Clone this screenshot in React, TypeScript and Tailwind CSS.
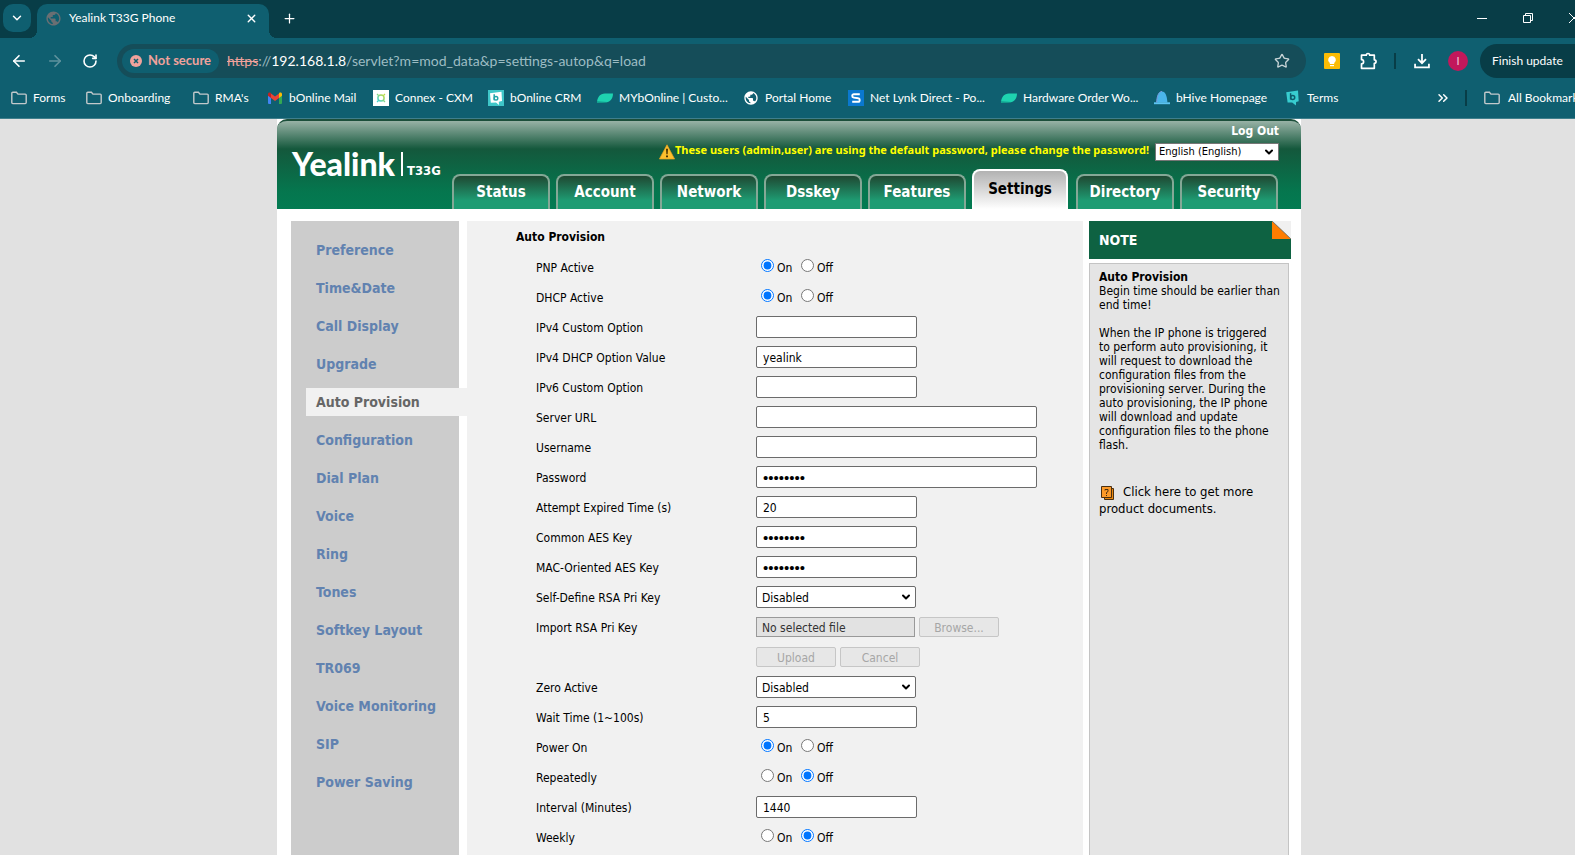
import type { ReactNode } from 'react'
import {
  ArrowLeft,
  ArrowRight,
  ChevronDown,
  ChevronsRight,
  Plus,
  RotateCw,
  Star,
  X,
} from 'lucide-react'
import { MdPublic } from 'react-icons/md'

/* ---------- icons ---------- */

function FolderIcon() {
  return (
    <svg viewBox="0 0 16 14" className="h-3.5 w-4" fill="none" stroke="#c3c9cb" strokeWidth="1.4">
      <path d="M.8 11.6V2.2a1 1 0 0 1 1-1h3.6l1.6 1.9h7.2a1 1 0 0 1 1 1v7.5a1 1 0 0 1-1 1H1.8a1 1 0 0 1-1-1z" />
    </svg>
  )
}

function GmailIcon() {
  return (
    <svg viewBox="0 0 16 12" className="h-3 w-4">
      <path d="M1 2v9a1 1 0 0 0 1 1h2V4z" fill="#4285f4" />
      <path d="M12 4v8h2a1 1 0 0 0 1-1V2z" fill="#34a853" />
      <path d="M12 1.6V6l3-2.2V2c0-1.7-1.8-1.9-2.6-1.3z" fill="#fbbc04" />
      <path d="M4 6V1.6l4 3 4-3V6L8 9z" fill="#ea4335" />
      <path d="M1 2v1.8L4 6V1.6L3.6.7C2.800 .1 1 .3 1 2z" fill="#c5221f" />
    </svg>
  )
}

function ConnexIcon() {
  return (
    <svg viewBox="0 0 16 16" className="h-4 w-4">
      <rect width="16" height="16" fill="#fff" />
      <defs>
        <linearGradient id="cx" x1="0" y1="1" x2="1" y2="0">
          <stop offset="0" stopColor="#3fd0d8" />
          <stop offset="1" stopColor="#c6dc3c" />
        </linearGradient>
      </defs>
      <circle cx="8" cy="8" r="3.1" fill="none" stroke="url(#cx)" strokeWidth="1.5" />
      <path d="M4 4l1.500 1.500M12 4l-1.500 1.500M4 12l1.500-1.500M12 12l-1.500-1.500" stroke="url(#cx)" strokeWidth="1.200" />
    </svg>
  )
}

function CrmIcon() {
  return (
    <svg viewBox="0 0 16 16" className="h-4 w-4">
      <rect width="16" height="16" fill="#3fc6c8" />
      <path d="M2 3.300 13.500 1.800 14 11l-3.200.8.2 3.200-3-2.600-5.200.3z" fill="#fff" />
      <path d="M6.200 4.300v5.900" stroke="#1fa3a8" strokeWidth="1.500" />
      <circle cx="8" cy="8.300" r="1.800" fill="none" stroke="#1fa3a8" strokeWidth="1.400" />
    </svg>
  )
}

function TermsIcon() {
  return (
    <svg viewBox="0 0 16 16" className="h-4 w-4">
      <path d="M1.200 2.200 13 .4l.7 10.800-2.600.8-.2 3.600-3.700-3.200-4.600.2z" fill="#38cdd0" />
      <path d="M5.600 3.200v6.300" stroke="#0d5c6c" strokeWidth="1.500" />
      <circle cx="7.700" cy="7.500" r="2" fill="none" stroke="#0d5c6c" strokeWidth="1.500" />
    </svg>
  )
}

function LeafIcon() {
  return (
    <svg viewBox="0 0 16 10" className="h-2.5 w-4">
      <path d="M0 9.800C.2 4 3 .4 8 .4h8C16 6 12.800 9.200 8.500 9.200z" fill="#1ed3b0" />
      <path d="M0 9.800c3.500.2 7.500.2 10.500-.9L0 8.300z" fill="#129a8c" />
    </svg>
  )
}

function NetLynkIcon() {
  return (
    <svg viewBox="0 0 16 16" className="h-4 w-4">
      <rect width="16" height="16" fill="#0a78cf" />
      <path d="M11.800 4.200H5.600c-1.200 0-1.400.5-1.400 1.600 0 1.300.3 1.700 1.500 1.800l4.600.6c1.100.1 1.400.6 1.400 1.700 0 1.300-.4 1.900-1.600 1.900H4.200" fill="none" stroke="#fff" strokeWidth="1.900" />
    </svg>
  )
}

function HiveIcon() {
  return (
    <svg viewBox="0 0 16 16" className="h-4 w-4">
      <path d="M2.600 12.500C3 6 4.600 1.500 8 1.500s5 4.500 5.400 11z" fill="#4ab5ea" />
      <path d="M0 12.300h16v1.900H0z" fill="#5cc4f2" />
      <path d="M2.600 12.500C3 6 4.600 1.500 8 1.500" fill="none" stroke="#7a9be0" strokeWidth="1" />
    </svg>
  )
}

function KeepIcon() {
  return (
    <svg viewBox="0 0 16 16" className="h-4 w-4">
      <rect width="16" height="16" rx="1" fill="#fbbc04" />
      <path d="M8 3a3.900 3.900 0 0 0-2.200 7.100v.9h4.400v-.9A3.900 3.900 0 0 0 8 3z" fill="#fff" />
      <path d="M6 12h4v1.200H6z" fill="#fff" />
    </svg>
  )
}

function PuzzleIcon() {
  return (
    <svg viewBox="0 0 18 18" className="h-[18px] w-[18px]" fill="none" stroke="#fff" strokeWidth="1.700" strokeLinejoin="round">
      <path d="M1.500 3.200h4.800a1.700 1.700 0 0 1 3.400 0h4.600v4.600a1.700 1.700 0 0 1 0 3.500v5H1.500v-4.500a2.100 2.100 0 0 0 0-4.200z" />
    </svg>
  )
}

function DownloadIcon() {
  return (
    <svg viewBox="0 0 18 18" className="h-4 w-4" fill="none" stroke="#fff" strokeWidth="2">
      <path d="M9 1v10M4.500 7 9 11.500 13.500 7M1.200 12.200v4h15.600v-4" />
    </svg>
  )
}

function WarningIcon() {
  return (
    <svg viewBox="0 0 16 16" className="h-4 w-4 shrink-0">
      <path d="M8 .8 15.600 15H.4z" fill="#fdbf2d" stroke="#e8a020" strokeWidth=".7" strokeLinejoin="round" />
      <path d="M7 4.800h2l-.4 5.400H7.400zM7 11.400h2v1.900H7z" fill="#4a3200" />
    </svg>
  )
}

function DocumentIcon() {
  return (
    <svg viewBox="0 0 14 16" className="mr-2 ml-0.5 inline-block h-4 w-3.5 align-middle">
      <path d="M3.500 3.500h9v11h-9z" fill="#e8870f" stroke="#4a2f10" />
      <path d="M.5 1.500h10v11H.5z" fill="#fd9a28" stroke="#4a2f10" />
      <path d="M4 5.500v-1h3v2L5.500 7.500v1.500M5.500 10v1" fill="none" stroke="#4a2f10" />
    </svg>
  )
}

/* ---------- browser frame ---------- */

function TabStrip() {
  return (
    <div className="flex h-[38px] items-center bg-[#083d47] pb-0.5 pl-[3px] text-white">
      <button aria-label="Search tabs" className="flex h-7 w-7 items-center justify-center rounded-[10px] bg-[#0f5f70]">
        <ChevronDown size={14} strokeWidth={2.5} />
      </button>
      <div className="relative -mb-0.5 ml-1.5 flex h-[34px] w-[232px] items-center self-end rounded-t-[10px] bg-[#0f5f70] pr-2.5 pb-1.5 pl-2 text-xs">
        <span className="absolute bottom-0 -left-2 h-2 w-2 bg-[radial-gradient(circle_at_0_0,#083d47_8px,#0f5f70_8px)]" />
        <span className="absolute -right-2 bottom-0 h-2 w-2 bg-[radial-gradient(circle_at_100%_0,#083d47_8px,#0f5f70_8px)]" />
        <MdPublic size={17} className="text-[#6a6f73]" />
        <span className="ml-[7px] flex-1">Yealink T33G Phone</span>
        <button aria-label="Close tab" className="flex h-4 w-4 items-center justify-center">
          <X size={13} strokeWidth={2.5} />
        </button>
      </div>
      <button aria-label="New tab" className="ml-3 flex h-4 w-4 items-center justify-center">
        <Plus size={15} strokeWidth={2} />
      </button>
      <div className="mr-0.5 ml-auto flex">
        <button aria-label="Minimize" className="flex h-8 w-[46px] items-center justify-center">
          <svg viewBox="0 0 10 10" className="h-2.5 w-2.5"><path d="M0 5.500h10" stroke="#fff" /></svg>
        </button>
        <button aria-label="Restore" className="flex h-8 w-[46px] items-center justify-center">
          <svg viewBox="0 0 10 10" className="h-2.5 w-2.5" fill="none" stroke="#fff"><path d="M.5 2.500h7v7h-7zM2.500 2.500v-2h7v7h-2" /></svg>
        </button>
        <button aria-label="Close window" className="flex h-8 w-[46px] items-center justify-center">
          <svg viewBox="0 0 10 10" className="h-2.5 w-2.5" stroke="#fff"><path d="M0 0l10 10M10 0L0 10" /></svg>
        </button>
      </div>
    </div>
  )
}

function AddressBar() {
  return (
    <div className="flex h-[46px] items-center text-white">
      <div className="flex w-[117px] items-center gap-[18px] pl-2.5">
        <button aria-label="Back"><ArrowLeft size={18} strokeWidth={2.2} /></button>
        <button aria-label="Forward" className="text-[#5f929d]"><ArrowRight size={18} strokeWidth={2.2} /></button>
        <button aria-label="Reload"><RotateCw size={16} strokeWidth={2.4} /></button>
      </div>
      <div className="flex h-[34px] flex-1 items-center rounded-full bg-[#154d59] pr-4 pl-[5px]">
        <button className="flex h-6 items-center gap-1.5 rounded-full bg-[#0f5f70] pr-2 pl-2 text-[13px] font-bold text-[#f0a29c]">
          <svg viewBox="0 0 12 12" className="h-3 w-3">
            <circle cx="6" cy="6" r="6" fill="#f0a29c" />
            <path d="M4 4l4 4M8 4L4 8" stroke="#0f5f70" strokeWidth="1.500" />
          </svg>
          Not secure
        </button>
        <span className="ml-2 text-sm text-[#9dbcc3]">
          <span className="text-[#f0a29c] line-through">https</span>://<span className="text-white">192.168.1.8</span>/servlet?m=mod_data&amp;p=settings-autop&amp;q=load
        </span>
        <button aria-label="Bookmark this tab" className="ml-auto text-[#c6d3d6]">
          <Star size={16} strokeWidth={2} />
        </button>
      </div>
      <div className="flex w-[293px] items-center pl-[18px]">
        <KeepIcon />
        <button aria-label="Extensions" className="ml-5"><PuzzleIcon /></button>
        <span className="ml-4 h-4 w-0.5 bg-[#083d47]" />
        <button aria-label="Downloads" className="ml-[18px]"><DownloadIcon /></button>
        <span className="ml-[18px] flex h-5 w-5 items-center justify-center rounded-full bg-[#c2185b] text-[11px] text-[#f3c5d7]">I</span>
        <button className="ml-3 flex h-[34px] flex-1 items-center gap-3 rounded-full bg-[#083d47] pl-3 text-xs whitespace-nowrap">
          Finish update
          <svg viewBox="0 0 4 14" className="h-3.5 w-1" fill="#fff">
            <circle cx="2" cy="2" r="1.500" />
            <circle cx="2" cy="7" r="1.500" />
            <circle cx="2" cy="12" r="1.500" />
          </svg>
        </button>
      </div>
    </div>
  )
}

const bookmarks: { label: string; icon: ReactNode; width: string }[] = [
  { label: 'Forms', icon: <FolderIcon />, width: 'w-[75px]' },
  { label: 'Onboarding', icon: <FolderIcon />, width: 'w-[107px]' },
  { label: "RMA's", icon: <FolderIcon />, width: 'w-[74px]' },
  { label: 'bOnline Mail', icon: <GmailIcon />, width: 'w-[106px]' },
  { label: 'Connex - CXM', icon: <ConnexIcon />, width: 'w-[115px]' },
  { label: 'bOnline CRM', icon: <CrmIcon />, width: 'w-[109px]' },
  { label: 'MYbOnline | Custo...', icon: <LeafIcon />, width: 'w-[146px]' },
  { label: 'Portal Home', icon: <MdPublic size={16} />, width: 'w-[105px]' },
  { label: 'Net Lynk Direct - Po...', icon: <NetLynkIcon />, width: 'w-[153px]' },
  { label: 'Hardware Order Wo...', icon: <LeafIcon />, width: 'w-[153px]' },
  { label: 'bHive Homepage', icon: <HiveIcon />, width: 'w-[131px]' },
  { label: 'Terms', icon: <TermsIcon />, width: 'w-[75px]' },
]

function BookmarksBar() {
  return (
    <div className="flex h-10 items-center pl-[11px] text-xs text-white">
      {bookmarks.map((b) => (
        <a key={b.label} href="#" className={`flex shrink-0 items-center gap-1.5 whitespace-nowrap ${b.width}`}>
          {b.icon}
          {b.label}
        </a>
      ))}
      <div className="ml-auto flex w-[164px] items-center">
        <button aria-label="More bookmarks"><ChevronsRight size={16} strokeWidth={2.2} /></button>
        <span className="ml-3.5 h-4 w-0.5 bg-[#083d47]" />
        <a href="#" className="ml-[17px] flex items-center gap-2 whitespace-nowrap">
          <FolderIcon />
          All Bookmarks
        </a>
      </div>
    </div>
  )
}

/* ---------- phone settings page ---------- */

const tabs = ['Status', 'Account', 'Network', 'Dsskey', 'Features', 'Settings', 'Directory', 'Security']

function PageHeader() {
  return (
    <header className="flex h-[90px] rounded-t-[10px] border-t-2 border-[#1c4f3b] bg-[linear-gradient(#98b2a6,#14583c_28px,#05764e_70px,#037b52)]">
      <div className="flex w-[175px] items-end self-start pt-7 pl-[15px] text-white">
        <span className="h-[30px] font-['Lato',sans-serif] text-[32px] leading-[30px] font-black">Yealink</span>
        <span className="mb-[3px] ml-1.5 h-6 w-0.5 bg-white" />
        <span className="ml-1 text-[13px] leading-4 font-bold">T33G</span>
      </div>
      <div className="flex flex-1 flex-col">
        <a href="#" className="mr-[22px] self-end pb-0.5 text-xs leading-5 font-bold text-white">Log Out</a>
        <div className="mr-[22px] flex h-[18px] items-center justify-end">
          <WarningIcon />
          <p className="pb-1 font-['Noto_Sans',sans-serif] text-[11px] leading-[14px] font-bold whitespace-nowrap text-[#ff0]">
            These users (admin,user) are using the default password, please change the password!
          </p>
          <div className="relative ml-1.5">
            <select aria-label="Language" defaultValue="en" className="block h-[18px] w-[124px] appearance-none border border-[#767676] bg-white pl-[3px] text-[11px] text-black">
              <option value="en">English (English)</option>
            </select>
            <ChevronDown size={12} strokeWidth={4} className="pointer-events-none absolute top-[3px] right-1 text-black" />
          </div>
        </div>
        <nav className="mt-auto flex items-end gap-1.5">
          {tabs.map((t) =>
            t === 'Settings' ? (
              <a key={t} href="#" className="mr-0.5 flex h-10 w-24 items-center justify-center rounded-t-lg border-x-2 border-t-2 border-white bg-linear-to-b from-[#b2b2b2] to-white pb-0.5 text-[15px] font-bold text-black">
                {t}
              </a>
            ) : (
              <a key={t} href="#" className="flex h-[35px] w-[98px] items-center justify-center rounded-t-lg border-x-2 border-t-2 border-[#84a896] bg-[linear-gradient(#1f4832,#1e9c73_75%)] text-[15px] font-bold text-white">
                {t}
              </a>
            ),
          )}
        </nav>
      </div>
    </header>
  )
}

const menu = [
  'Preference', 'Time&Date', 'Call Display', 'Upgrade', 'Auto Provision', 'Configuration', 'Dial Plan', 'Voice',
  'Ring', 'Tones', 'Softkey Layout', 'TR069', 'Voice Monitoring', 'SIP', 'Power Saving',
]

function SideMenu() {
  return (
    <nav className="flex w-[168px] flex-col gap-2.5 bg-[#ccc] pt-[15px] pl-[15px] text-sm font-bold">
      {menu.map((m) => (
        <a
          key={m}
          href="#"
          className={
            m === 'Auto Provision'
              ? '-mr-2 flex h-7 items-center bg-[#f1f1f1] pl-2.5 text-[#666]'
              : 'flex h-7 items-center pl-2.5 text-[#6182b0]'
          }
        >
          {m}
        </a>
      ))}
    </nav>
  )
}

type Field = {
  label: string
  kind: 'radio' | 'text' | 'password' | 'select' | 'file'
  value?: string
  wide?: boolean
}

const fields: Field[] = [
  { label: 'PNP Active', kind: 'radio', value: 'On' },
  { label: 'DHCP Active', kind: 'radio', value: 'On' },
  { label: 'IPv4 Custom Option', kind: 'text' },
  { label: 'IPv4 DHCP Option Value', kind: 'text', value: 'yealink' },
  { label: 'IPv6 Custom Option', kind: 'text' },
  { label: 'Server URL', kind: 'text', wide: true },
  { label: 'Username', kind: 'text', wide: true },
  { label: 'Password', kind: 'password', value: '********', wide: true },
  { label: 'Attempt Expired Time (s)', kind: 'text', value: '20' },
  { label: 'Common AES Key', kind: 'password', value: '********' },
  { label: 'MAC-Oriented AES Key', kind: 'password', value: '********' },
  { label: 'Self-Define RSA Pri Key', kind: 'select', value: 'Disabled' },
  { label: 'Import RSA Pri Key', kind: 'file', value: 'No selected file' },
  { label: 'Zero Active', kind: 'select', value: 'Disabled' },
  { label: 'Wait Time (1~100s)', kind: 'text', value: '5' },
  { label: 'Power On', kind: 'radio', value: 'On' },
  { label: 'Repeatedly', kind: 'radio', value: 'Off' },
  { label: 'Interval (Minutes)', kind: 'text', value: '1440' },
  { label: 'Weekly', kind: 'radio', value: 'Off' },
]

function DisabledButton({ children }: { children: ReactNode }) {
  return (
    <button disabled className="h-5 w-20 rounded-[2px] border border-[#c6c6c6] bg-[#e7e7e7] pt-0.5 text-xs leading-none text-[#a6a6a6]">
      {children}
    </button>
  )
}

function Row({ field }: { field: Field }) {
  const { label, kind, value, wide } = field
  const id = label.replace(/[^A-Za-z0-9]+/g, '-').toLowerCase()

  if (kind === 'radio') {
    return (
      <div role="radiogroup" aria-label={label} className="flex h-[30px] items-center pt-0.5">
        <span className="w-[220px]">{label}</span>
        {['On', 'Off'].map((o) => (
          <label key={o} className="flex w-10 items-center gap-[3px] pl-[5px]">
            <input type="radio" name={id} defaultChecked={value === o} className="mb-1.5 h-[13px] w-[13px] shrink-0" />
            {o}
          </label>
        ))}
      </div>
    )
  }

  return (
    <div className={kind === 'file' ? 'flex h-[60px]' : 'flex h-[30px]'}>
      <label htmlFor={id} className="flex h-[30px] w-[220px] items-center pt-0.5">{label}</label>
      {kind === 'select' && (
        <div className="relative self-center">
          <select id={id} defaultValue={value} className="block h-[22px] w-40 appearance-none rounded-[2px] border border-[#6b6b6b] bg-white pt-0.5 pl-[5px] text-xs">
            <option>Disabled</option>
            <option>Enabled</option>
          </select>
          <ChevronDown size={12} strokeWidth={4} className="pointer-events-none absolute top-[5px] right-1" />
        </div>
      )}
      {kind === 'file' && (
        <div className="flex flex-col gap-2.5 pt-[5px]">
          <div className="flex gap-1">
            <input id={id} readOnly value={value} className="h-5 w-[159px] border border-[#999] bg-[#e2e2e2] px-[5px] pt-0.5 text-xs text-[#333]" />
            <DisabledButton>Browse...</DisabledButton>
          </div>
          <div className="flex gap-1">
            <DisabledButton>Upload</DisabledButton>
            <DisabledButton>Cancel</DisabledButton>
          </div>
        </div>
      )}
      {(kind === 'text' || kind === 'password') && (
        <input
          id={id}
          type={kind}
          defaultValue={value}
          className={`h-[22px] self-center rounded-[2px] border border-[#6b6b6b] bg-white px-1.5 ${wide ? 'w-[281px]' : 'w-[161px]'} ${
            kind === 'password' ? "font-['Liberation_Sans',sans-serif] text-[15px]" : 'pt-0.5 text-xs'
          }`}
        />
      )}
    </div>
  )
}

function NotePanel() {
  return (
    <aside className="flex w-[202px] flex-col">
      <div className="flex h-[38px] justify-between bg-[#0e6242] pl-2.5">
        <h2 className="self-center text-sm font-bold text-white">NOTE</h2>
        <svg viewBox="0 0 19 18" className="h-[18px] w-[19px]">
          <path d="M0 0h19v18z" fill="#f0f0f0" />
          <path d="M0 0v18h19z" fill="#ff7d00" />
          <path d="M0 0l19 18" stroke="#777" strokeWidth=".8" />
        </svg>
      </div>
      <div className="mt-1 mr-0.5 flex-1 border border-b-0 border-[#c4c4c4] bg-[#e5e5e5] pt-1.5 pl-[9px] text-xs leading-[14px]">
        <h3 className="font-bold">Auto Provision</h3>
        <p>Begin time should be earlier than end time!</p>
        <p className="mt-3.5 pr-3">
          When the IP phone is triggered to perform auto provisioning, it will request to download the configuration
          files from the provisioning server. During the auto provisioning, the IP phone will download and update
          configuration files to the phone flash.
        </p>
        <a href="#" className="mt-8 block pr-5 text-[13px] leading-4">
          <DocumentIcon />
          Click here to get more product documents.
        </a>
      </div>
    </aside>
  )
}

export default function App() {
  return (
    <div className="flex min-h-screen flex-col overflow-hidden bg-[#e1e1e1] font-['DejaVu_Sans_Condensed','DejaVu_Sans',sans-serif] text-black">
      <div className="-mr-6 border-b border-[#3f7f8c] bg-[#0f5f70] font-['Lato',sans-serif]">
        <TabStrip />
        <div className="h-[80px]">
          <AddressBar />
          <div className="-mt-1.5">
            <BookmarksBar />
          </div>
        </div>
      </div>
      <div className="flex flex-1 justify-center pl-[3px]">
        <div className="flex w-[1024px] flex-col bg-white">
          <PageHeader />
          <div className="flex flex-1 pt-3 pr-2.5 pl-3.5">
            <SideMenu />
            <main className="ml-2 flex-1 bg-[#f1f1f1] pl-[49px]">
              <h1 className="h-[31px] text-xs leading-8 font-bold">Auto Provision</h1>
              <form className="pl-5 text-xs">
                {fields.map((f) => (
                  <Row key={f.label} field={f} />
                ))}
              </form>
            </main>
            <div className="ml-1.5 flex">
              <NotePanel />
            </div>
          </div>
        </div>
      </div>
    </div>
  )
}
